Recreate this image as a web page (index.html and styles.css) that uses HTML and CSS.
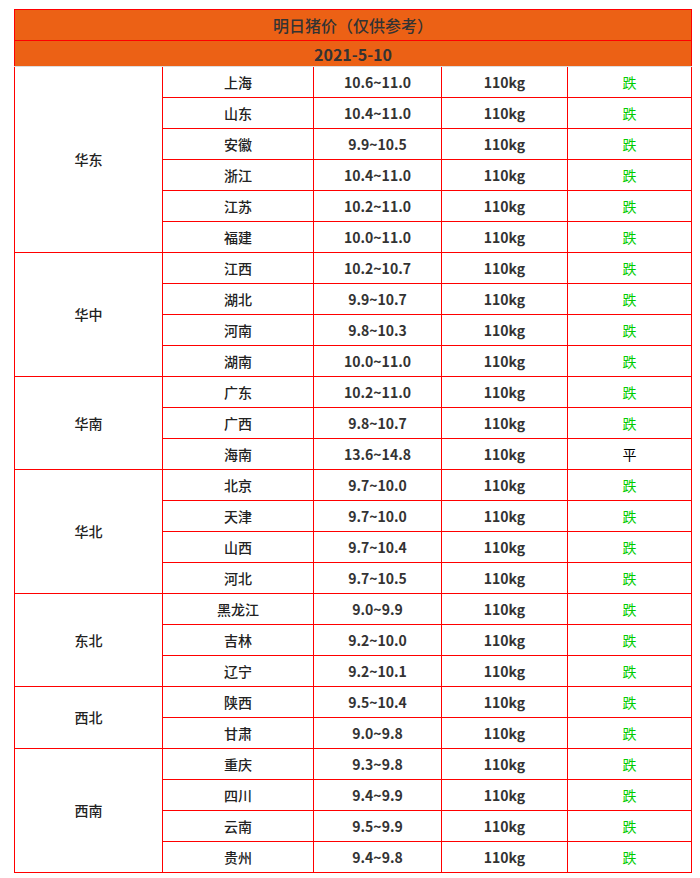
FILE: index.html
```html
<!DOCTYPE html>
<html lang="zh">
<head>
<meta charset="utf-8">
<title>明日猪价</title>
<link rel="stylesheet" href="styles.css">
</head>
<body>
<div class="wrap">
<table class="price">
<colgroup>
<col class="c1"><col class="c2"><col class="c3"><col class="c4"><col class="c5">
</colgroup>
<thead>
<tr class="title"><th colspan="5">明日猪价（仅供参考）</th></tr>
<tr class="date"><th colspan="5">2021-5-10</th></tr>
</thead>
<tbody>
<tr class="first"><td rowspan="6" class="region">华东</td><td class="prov">上海</td><td class="num">10.6~11.0</td><td class="num">110kg</td><td class="down">跌</td></tr>
<tr><td class="prov">山东</td><td class="num">10.4~11.0</td><td class="num">110kg</td><td class="down">跌</td></tr>
<tr><td class="prov">安徽</td><td class="num">9.9~10.5</td><td class="num">110kg</td><td class="down">跌</td></tr>
<tr><td class="prov">浙江</td><td class="num">10.4~11.0</td><td class="num">110kg</td><td class="down">跌</td></tr>
<tr><td class="prov">江苏</td><td class="num">10.2~11.0</td><td class="num">110kg</td><td class="down">跌</td></tr>
<tr><td class="prov">福建</td><td class="num">10.0~11.0</td><td class="num">110kg</td><td class="down">跌</td></tr>
<tr><td rowspan="4" class="region">华中</td><td class="prov">江西</td><td class="num">10.2~10.7</td><td class="num">110kg</td><td class="down">跌</td></tr>
<tr><td class="prov">湖北</td><td class="num">9.9~10.7</td><td class="num">110kg</td><td class="down">跌</td></tr>
<tr><td class="prov">河南</td><td class="num">9.8~10.3</td><td class="num">110kg</td><td class="down">跌</td></tr>
<tr><td class="prov">湖南</td><td class="num">10.0~11.0</td><td class="num">110kg</td><td class="down">跌</td></tr>
<tr><td rowspan="3" class="region">华南</td><td class="prov">广东</td><td class="num">10.2~11.0</td><td class="num">110kg</td><td class="down">跌</td></tr>
<tr><td class="prov">广西</td><td class="num">9.8~10.7</td><td class="num">110kg</td><td class="down">跌</td></tr>
<tr><td class="prov">海南</td><td class="num">13.6~14.8</td><td class="num">110kg</td><td class="flat">平</td></tr>
<tr><td rowspan="4" class="region">华北</td><td class="prov">北京</td><td class="num">9.7~10.0</td><td class="num">110kg</td><td class="down">跌</td></tr>
<tr><td class="prov">天津</td><td class="num">9.7~10.0</td><td class="num">110kg</td><td class="down">跌</td></tr>
<tr><td class="prov">山西</td><td class="num">9.7~10.4</td><td class="num">110kg</td><td class="down">跌</td></tr>
<tr><td class="prov">河北</td><td class="num">9.7~10.5</td><td class="num">110kg</td><td class="down">跌</td></tr>
<tr><td rowspan="3" class="region">东北</td><td class="prov">黑龙江</td><td class="num">9.0~9.9</td><td class="num">110kg</td><td class="down">跌</td></tr>
<tr><td class="prov">吉林</td><td class="num">9.2~10.0</td><td class="num">110kg</td><td class="down">跌</td></tr>
<tr><td class="prov">辽宁</td><td class="num">9.2~10.1</td><td class="num">110kg</td><td class="down">跌</td></tr>
<tr><td rowspan="2" class="region">西北</td><td class="prov">陕西</td><td class="num">9.5~10.4</td><td class="num">110kg</td><td class="down">跌</td></tr>
<tr><td class="prov">甘肃</td><td class="num">9.0~9.8</td><td class="num">110kg</td><td class="down">跌</td></tr>
<tr><td rowspan="4" class="region">西南</td><td class="prov">重庆</td><td class="num">9.3~9.8</td><td class="num">110kg</td><td class="down">跌</td></tr>
<tr><td class="prov">四川</td><td class="num">9.4~9.9</td><td class="num">110kg</td><td class="down">跌</td></tr>
<tr><td class="prov">云南</td><td class="num">9.5~9.9</td><td class="num">110kg</td><td class="down">跌</td></tr>
<tr><td class="prov">贵州</td><td class="num">9.4~9.8</td><td class="num">110kg</td><td class="down">跌</td></tr>
</tbody>
</table>
</div>
</body>
</html>
```

FILE: styles.css
```css
html, body {
  margin: 0;
  padding: 0;
  background: #fff;
}

.wrap {
  padding: 9px 0 0 14px;
}

.price {
  border-collapse: collapse;
  table-layout: fixed;
  width: 677px;
  font-family: "Noto Sans CJK SC", "Noto Sans", sans-serif;
  color: #333;
}

.c1 { width: 148px; }
.c2 { width: 151px; }
.c3 { width: 128px; }
.c4 { width: 126px; }
.c5 { width: 124px; }

.price th {
  background: #ec6115;
  border: 1px solid #f00;
  text-align: center;
  padding: 0;
  color: #333;
}

.price .title th {
  height: 30px;
  font-size: 16px;
  font-weight: 500;
}

.price .date th {
  height: 25px;
  font-size: 16px;
  font-weight: bold;
  border-bottom: 1px solid #ddd;
}

.price td {
  border: 1px solid #f00;
  height: 30px;
  padding: 0;
  text-align: center;
  vertical-align: middle;
  font-size: 14px;
  line-height: 17px;
}

.price tr.first td {
  border-top-color: #ddd;
}

.region, .prov {
  font-weight: 500;
  font-size: 15px;
  color: #222;
}

.num {
  font-weight: bold;
}

.down {
  color: #00cc00;
  font-size: 16px;
}

.flat {
  color: #000;
  font-size: 16px;
}
```
